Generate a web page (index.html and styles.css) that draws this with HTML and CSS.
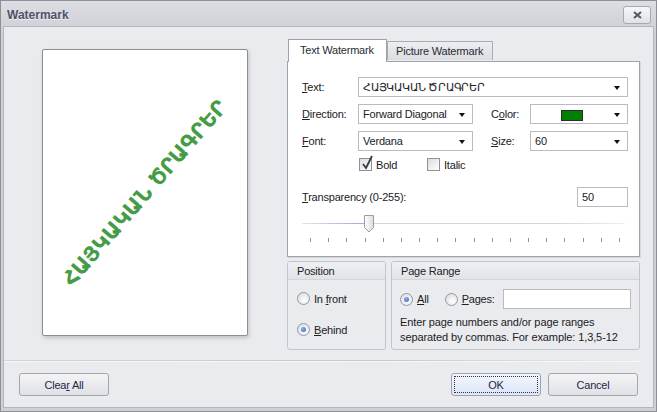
FILE: index.html
```html
<!DOCTYPE html>
<html lang="en">

<head>
  <title>Watermark</title>
  <meta charset="utf-8">
  <link rel="stylesheet" href="styles.css">
</head>

<body>

  <div class="window">
    <div class="titlebar">
      <div class="title">Watermark</div>
      <div class="close-btn">
        <svg width="9" height="8" viewBox="0 0 9 8">
          <path d="M1 1 L8 7 M8 1 L1 7" stroke="#55575f" stroke-width="2" fill="none" />
        </svg>
      </div>
    </div>

    <div class="client">
      <div class="main">

        <div class="preview">
          <div class="page">
            <div class="wm-text">ՀԱՅԿԱԿԱՆ ԾՐԱԳՐԵՐ</div>
          </div>
        </div>

        <div class="settings">
          <div class="tabs">
            <div class="tab active">Text Watermark</div>
            <div class="tab">Picture Watermark</div>
          </div>

          <div class="tab-panel">
            <div class="form-grid">
              <div class="lbl"><u>T</u>ext:</div>
              <div class="combo span-4">ՀԱՅԿԱԿԱՆ ԾՐԱԳՐԵՐ<span class="arrow"></span></div>

              <div class="lbl"><u>D</u>irection:</div>
              <div class="combo">Forward Diagonal<span class="arrow"></span></div>
              <div></div>
              <div class="lbl">C<u>o</u>lor:</div>
              <div class="combo color-combo"><span class="swatch"></span><span class="arrow"></span></div>

              <div class="lbl"><u>F</u>ont:</div>
              <div class="combo">Verdana<span class="arrow"></span></div>
              <div></div>
              <div class="lbl"><u>S</u>ize:</div>
              <div class="combo">60<span class="arrow"></span></div>

              <div></div>
              <div class="check-row span-4">
                <div class="check-item">
                  <span class="checkbox checked">
                    <svg width="14" height="16" viewBox="0 0 14 16">
                      <path d="M3 9 L6 13 L12 1" stroke="#3a3c44" stroke-width="1.8" fill="none" />
                    </svg>
                  </span>
                  <span>Bold</span>
                </div>
                <div class="check-item italic-item">
                  <span class="checkbox"></span>
                  <span>Italic</span>
                </div>
              </div>
            </div>

            <div class="transparency-row">
              <div class="lbl"><u>T</u>ransparency (0-255):</div>
              <div class="textbox small">50</div>
            </div>

            <div class="slider">
              <div class="track"></div>
              <div class="track-fill"></div>
              <div class="thumb">
                <svg width="12" height="18" viewBox="0 0 12 18">
                  <defs>
                    <linearGradient id="tg" x1="0" y1="0" x2="1" y2="0">
                      <stop offset="0" stop-color="#ffffff" />
                      <stop offset="1" stop-color="#dcdde2" />
                    </linearGradient>
                  </defs>
                  <path d="M1.5 0.5 H10.5 V12.5 L6 17 L1.5 12.5 Z" fill="url(#tg)" stroke="#9a9ca3" />
                </svg>
              </div>
              <div class="ticks">
                <span></span><span></span><span></span><span></span><span></span><span></span>
                <span></span><span></span><span></span><span></span><span></span><span></span>
                <span></span><span></span><span></span><span></span><span></span><span></span>
              </div>
            </div>
          </div>

          <div class="groups">
            <div class="group position-group">
              <div class="group-header">Position</div>
              <div class="group-body position-body">
                <div class="radio-item"><span class="radio"></span><span>In <u>f</u>ront</span></div>
                <div class="radio-item"><span class="radio checked"></span><span><u>B</u>ehind</span></div>
              </div>
            </div>

            <div class="group range-group">
              <div class="group-header">Page Range</div>
              <div class="group-body range-body">
                <div class="range-row">
                  <div class="radio-item"><span class="radio checked"></span><span><u>A</u>ll</span></div>
                  <div class="radio-item pages-item"><span class="radio"></span><span><u>P</u>ages:</span></div>
                  <div class="textbox pages-box"></div>
                </div>
                <div class="hint">Enter page numbers and/or page ranges<br>separated by commas. For example: 1,3,5-12</div>
              </div>
            </div>
          </div>
        </div>

      </div>

      <div class="separator"></div>

      <div class="footer">
        <div class="btn"><span>Clea<u>r</u> All</span></div>
        <div class="footer-right">
          <div class="btn default"><span class="focus">OK</span></div>
          <div class="btn">Cancel</div>
        </div>
      </div>
    </div>
  </div>

</body>

</html>
```

FILE: styles.css
```css
    html, body {
      margin: 0;
      padding: 0;
    }

    body {
      font-family: "Liberation Sans", Arial, sans-serif;
      font-size: 11px;
      letter-spacing: -0.2px;
      color: #202124;
    }

    .window {
      width: 657px;
      height: 412px;
      box-sizing: border-box;
      border: 1px solid #8e9098;
      background: linear-gradient(#dddee3, #cfd0d6 30px, #cfd0d6);
      display: flex;
      flex-direction: column;
    }

    .titlebar {
      height: 25px;
      display: flex;
      align-items: center;
      justify-content: space-between;
      padding: 0 5px 0 6px;
    }

    .title {
      font-weight: bold;
      font-size: 12px;
      letter-spacing: 0;
      color: #4d5068;
      text-shadow: 0 1px 0 rgba(255, 255, 255, 0.7);
      margin-top: 2px;
    }

    .close-btn {
      width: 26px;
      height: 16px;
      border: 1px solid #a6a8ae;
      border-radius: 3px;
      background: linear-gradient(#f7f7f9, #e1e2e6);
      display: flex;
      align-items: center;
      justify-content: center;
      margin-top: 3px;
    }

    .client {
      flex: 1;
      margin: 0 2px 3px 2px;
      border: 1px solid #b4b6bd;
      background: #eaebef;
      display: flex;
      flex-direction: column;
    }

    .main {
      display: flex;
      padding-top: 12px;
    }

    /* preview */

    .preview {
      width: 283px;
    }

    .page {
      margin: 10px 0 0 38px;
      width: 204px;
      height: 285px;
      background: #fff;
      border: 1px solid #8c8e96;
      border-radius: 2px;
      box-shadow: 1px 2px 4px rgba(0, 0, 0, 0.18);
      display: flex;
      align-items: center;
      justify-content: center;
      overflow: hidden;
    }

    .wm-text {
      font-family: "DejaVu Sans", sans-serif;
      font-weight: bold;
      font-size: 21px;
      letter-spacing: 0;
      color: rgb(70, 156, 70);
      white-space: nowrap;
      transform: rotate(-49deg);
    }

    /* tabs */

    .settings {
      width: 353px;
    }

    .tabs {
      display: flex;
      align-items: flex-end;
      height: 22px;
      padding-left: 1px;
    }

    .tab {
      height: 19px;
      box-sizing: border-box;
      border: 1px solid #a9abb2;
      border-bottom: none;
      background: linear-gradient(#eceef1, #dcdde2);
      padding: 3px 9px 0 8px;
      color: #2a2c33;
      margin-bottom: 1px;
    }

    .tab.active {
      height: 23px;
      background: #fff;
      border-color: #9fa2a9;
      padding: 4px 11px 0 11px;
      margin-bottom: -1px;
      position: relative;
      z-index: 1;
      width: 99px;
    }

    .tab-panel {
      height: 196px;
      box-sizing: border-box;
      background: #fff;
      border: 1px solid #9fa2a9;
      box-shadow: 1px 1px 0 #d6d7dc;
      padding: 15px 11px 0 14px;
    }

    .form-grid {
      display: grid;
      grid-template-columns: 56px 115px 18px 39px 98px;
      grid-template-rows: 20px 20px 20px 13px;
      row-gap: 7px;
      align-items: center;
    }

    .span-4 {
      grid-column: span 4;
    }

    .lbl {
      white-space: nowrap;
    }

    .combo, .textbox {
      height: 20px;
      box-sizing: border-box;
      border: 1px solid #b9bbc1;
      background: #fff;
      padding: 3px 0 0 4px;
      position: relative;
      white-space: nowrap;
    }

    .combo .arrow {
      position: absolute;
      right: 7px;
      top: 8px;
      width: 0;
      height: 0;
      border-left: 3px solid transparent;
      border-right: 3px solid transparent;
      border-top: 4px solid #111;
    }

    .color-combo .swatch {
      display: block;
      width: 20px;
      height: 9px;
      margin: 2px 0 0 26px;
      background: #008000;
      border: 1px solid #2c2c2c;
    }

    .check-row {
      display: flex;
      align-items: center;
      height: 13px;
      padding-left: 1px;
    }

    .check-item {
      display: flex;
      align-items: center;
      gap: 4px;
      width: 68px;
    }

    .checkbox {
      width: 11px;
      height: 11px;
      border: 1px solid #8e9198;
      background: linear-gradient(135deg, #dcdde1, #fff);
      position: relative;
      flex-shrink: 0;
    }

    .checkbox svg {
      position: absolute;
      left: 0;
      top: -4px;
    }

    .transparency-row {
      display: flex;
      justify-content: space-between;
      align-items: center;
      margin-top: 16px;
      width: 326px;
    }

    .textbox.small {
      width: 51px;
    }

    .slider {
      position: relative;
      width: 326px;
      height: 36px;
    }

    .track {
      position: absolute;
      left: 0;
      right: 3px;
      top: 16px;
      height: 1px;
      background: linear-gradient(to right, #e6e6ea, #d4d5da 20%, #d4d5da 80%, #eeeff2);
    }

    .track-fill {
      position: absolute;
      left: 0;
      width: 64px;
      top: 16px;
      height: 1px;
      background: linear-gradient(to right, rgba(200, 180, 230, 0), #b9a1dc);
    }

    .thumb {
      position: absolute;
      left: 61px;
      top: 8px;
      width: 12px;
      height: 18px;
    }

    .ticks {
      position: absolute;
      left: 8px;
      right: 8px;
      top: 31px;
      display: flex;
      justify-content: space-between;
    }

    .ticks span {
      width: 1px;
      height: 4px;
      background: #8d8f95;
    }

    /* groups */

    .groups {
      display: flex;
      gap: 5px;
      margin-top: 4px;
    }

    .group {
      height: 89px;
      box-sizing: border-box;
      border: 1px solid #c3c5cb;
      border-radius: 3px;
      background: #eaebef;
    }

    .position-group {
      width: 99px;
    }

    .range-group {
      width: 249px;
    }

    .group-header {
      height: 18px;
      box-sizing: border-box;
      padding: 3px 0 0 9px;
      background: linear-gradient(#eff0f3, #e2e3e7);
      border-bottom: 1px solid #d3d4d9;
      border-radius: 2px 2px 0 0;
    }

    .radio-item {
      display: flex;
      align-items: center;
      gap: 4px;
    }

    .radio {
      width: 11px;
      height: 11px;
      border: 1px solid #9497a0;
      border-radius: 50%;
      background: radial-gradient(circle at 60% 65%, #ffffff, #d6d7dc);
      position: relative;
      flex-shrink: 0;
    }

    .radio.checked::after {
      content: "";
      position: absolute;
      left: 3px;
      top: 3px;
      width: 5px;
      height: 5px;
      border-radius: 50%;
      background: radial-gradient(circle at 40% 35%, #8fb0f0, #2d5fc9);
    }

    .position-body {
      display: flex;
      flex-direction: column;
      gap: 18px;
      padding: 12px 0 0 9px;
    }

    .range-body {
      padding: 9px 0 0 8px;
    }

    .range-row {
      display: flex;
      align-items: center;
    }

    .pages-item {
      margin-left: 16px;
    }

    .pages-box {
      width: 128px;
      margin-left: 8px;
    }

    .hint {
      margin-top: 6px;
      line-height: 15px;
      letter-spacing: -0.1px;
    }

    /* footer */

    .separator {
      height: 1px;
      margin: 10px 12px 0 0;
      background: linear-gradient(to right, #d2d3d8, #c7c8cd 60%, #eaebef);
      box-shadow: 0 1px 0 #f7f7f9;
    }

    .footer {
      display: flex;
      justify-content: space-between;
      padding: 12px 15px 0 15px;
    }

    .footer-right {
      display: flex;
      gap: 7px;
    }

    .btn {
      width: 90px;
      height: 23px;
      box-sizing: border-box;
      border: 1px solid #a4a6ad;
      border-radius: 3px;
      background: linear-gradient(#f4f4f6, #e0e1e5);
      color: #23264a;
      display: flex;
      align-items: center;
      justify-content: center;
    }

    .btn.default {
      background: linear-gradient(#f3f6fd, #dde5f8);
      border-color: #9ea3b3;
    }

    .btn .focus {
      display: flex;
      align-items: center;
      justify-content: center;
      width: 84px;
      height: 17px;
      box-sizing: border-box;
      border: 1px dotted #333;
    }
```
